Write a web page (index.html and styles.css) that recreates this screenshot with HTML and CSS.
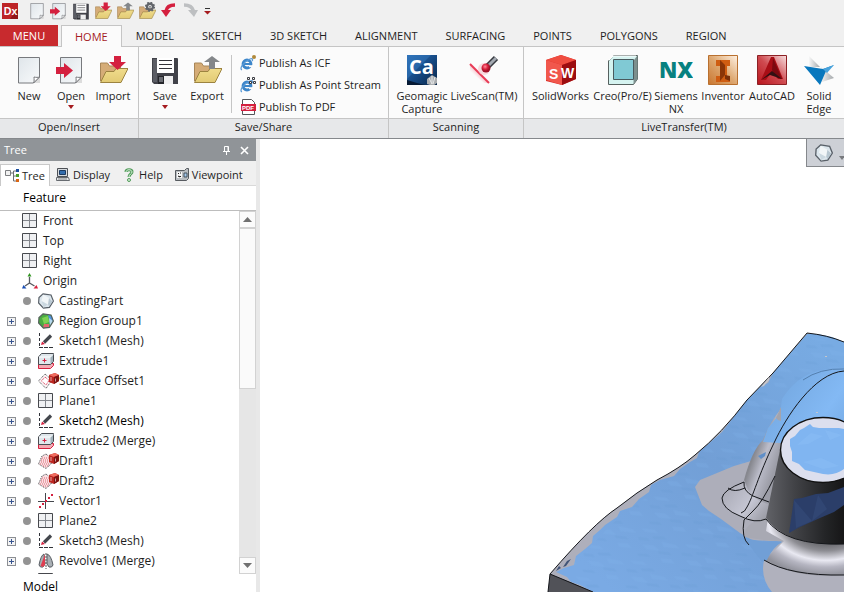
FILE: index.html
```html
<!DOCTYPE html>
<html lang="en">
<head>
<meta charset="utf-8">
<title>Design X</title>
<link rel="stylesheet" href="styles.css">
</head>
<body>
<svg class="defs" aria-hidden="true">
  <defs>
    <linearGradient id="paper" x1="0" y1="0" x2="1" y2="1"><stop offset="0" stop-color="#dfe5ea"/><stop offset="1" stop-color="#f8fafb"/></linearGradient>
    <linearGradient id="gold" x1="0" y1="0" x2="0" y2="1"><stop offset="0" stop-color="#f0dc8c"/><stop offset="1" stop-color="#e2ca74"/></linearGradient>
    <linearGradient id="navy" x1="0" y1="0" x2="1" y2="1"><stop offset="0" stop-color="#2b70b8"/><stop offset=".5" stop-color="#164a85"/><stop offset="1" stop-color="#0a2648"/></linearGradient>
    <linearGradient id="copper" x1="0" y1="1" x2="1" y2="0"><stop offset="0" stop-color="#c9762f"/><stop offset=".5" stop-color="#dea871"/><stop offset="1" stop-color="#fff2e4"/></linearGradient>
    <linearGradient id="crimson" x1="0" y1="1" x2="1" y2="0"><stop offset="0" stop-color="#b8141c"/><stop offset=".5" stop-color="#cf4a50"/><stop offset="1" stop-color="#f8e2e2"/></linearGradient>
    <linearGradient id="beam" x1="1" y1="0" x2="0" y2="1"><stop offset=".3" stop-color="#e8203f"/><stop offset=".75" stop-color="#fff" stop-opacity="0"/></linearGradient>
    <linearGradient id="silver"><stop offset="0" stop-color="#fff"/><stop offset="1" stop-color="#a4a8ab"/></linearGradient>
    <radialGradient id="ball" cx=".4" cy=".35"><stop offset="0" stop-color="#ff8c98"/><stop offset=".6" stop-color="#d91f3c"/><stop offset="1" stop-color="#a01228"/></radialGradient>
  </defs>
  <symbol id="i-new" viewBox="0 0 30 30">
    <path d="M5 3h21v25H5z" fill="#000" opacity=".12"/>
    <path d="M4.500 2.500h21V22l-6 6h-15z" fill="url(#paper)" stroke="#77797d"/>
    <path d="M19.500 28c1-2 .5-4 .5-6 2 .5 4 .5 5.500 0z" fill="#fff" stroke="#77797d"/>
  </symbol>
  <symbol id="i-arrow" viewBox="0 0 30 30"><path d="M0 12h8V8l9 7.500L8 23v-4H0z" fill="#d4203f"/></symbol>
  <symbol id="i-folder" viewBox="0 0 30 30">
    <path d="M2.500 26V8h7l2 3h11v5" fill="#d5ac77" stroke="#a88658"/>
    <path d="M2.500 27.500 8 16.500h8l2-3h12L23 27.500z" fill="url(#gold)" stroke="#9c8340"/>
  </symbol>
  <symbol id="i-down" viewBox="0 0 30 30"><path d="M16 1h7v6h5l-8.500 8L11 7h5z" fill="#d4203f"/></symbol>
  <symbol id="i-up" viewBox="0 0 30 30"><path d="M17 14V7h-5l8-6 8 6h-5v7z" fill="#84878a"/></symbol>
  <symbol id="i-save" viewBox="0 0 30 30">
    <path d="M2 3h25q1 0 1 1v25H4l-2-2z" fill="#414249"/><path d="M3 4h4v23H3z" fill="#5b5d65"/>
    <path d="M7 3h17v15H7z" fill="#fff"/><path d="M9 5.500h13M9 9.500h13M9 13.500h13" stroke="#34343a"/>
    <path d="M8 21h15v8H8z" fill="#efeff0"/><path d="M8 21h6v8H8z" fill="#24252a"/><path d="M9 22h4v5H9z" fill="#696b72"/>
  </symbol>
  <symbol id="i-gear" viewBox="0 0 30 30"><circle cx="20" cy="8" r="5" fill="none" stroke="#62656a" stroke-width="4"/><circle cx="20" cy="8" r="7" fill="none" stroke="#62656a" stroke-width="3" stroke-dasharray="2.750 2.750"/><circle cx="20" cy="8" r="1.500" fill="#62656a"/></symbol>
  <symbol id="i-e" viewBox="0 0 16 16">
    <circle cx="7" cy="9" r="4" fill="none" stroke="#3d86ca" stroke-width="2.800"/><path d="M4 9h8" stroke="#3d86ca" stroke-width="2"/><path d="M9 10.200h4v2H9z" fill="#fbfbfb"/>
    <path d="M2 15C-1 14 3 7 10 4c3-1 3 1 2 2" fill="none" stroke="#5b9bd6" stroke-width="1.300"/>
  </symbol>
  <symbol id="i-gem" viewBox="0 0 16 16">
    <path d="M5 .8 13 2l2.400 6-4 6.400-6 .8L.6 10 1 4.500z" fill="#dce6ed" stroke="#596068" stroke-width="1.200"/>
    <path d="M5 1.500 11 5l3.500 3L10 11.500 5.500 14.500 3.500 8z" fill="#f2f6f8"/><path d="m11 5 3.500 3.500L11 13.500 10 11z" fill="#b8c7d1"/><path d="M3.500 8 10 11.500 5.500 14.500z" fill="#cbd8e0"/>
  </symbol>
  <symbol id="i-region" viewBox="0 0 16 16">
    <path d="M5 .8 13 2l2.400 6-4 6.400-6 .8L.6 10 1 4.500z" fill="#4bac42"/>
    <path d="M10 2l4 1 1 5-3 3z" fill="#4f93e0"/><path d="M4 5l6-2 1 6-5 2z" fill="#7fd354"/><path d="m5 15 1-4 5 0 0 3z" fill="#e46671"/><path d="m11 5 1 8 3-5z" fill="#b5d8ed"/>
    <path d="M5 .8 13 2l2.400 6-4 6.400-6 .8L.6 10 1 4.500z" fill="none" stroke="#54605c" stroke-width="1.200"/>
  </symbol>
  <symbol id="i-plane" viewBox="0 0 16 16"><path d="M.5.5h14v14H.5z" fill="#eff0f2" stroke="#46484d"/><path d="M7.500 1v13M1 7.500h13" stroke="#83868c"/></symbol>
  <symbol id="i-origin" viewBox="0 0 16 16"><path d="M7.500 4v6M7.500 10 3 13M7.500 10l5 3" stroke="#55585e" stroke-width="1.300" fill="none"/><path d="M7.500 0 9.500 3.500h-4z" fill="#2f941e"/><path d="M0 15.500 1.500 12 4.500 15.500z" fill="#1a4fb4"/><path d="m16 15.500-1.500-3.500-3 3.500z" fill="#d9203c"/></symbol>
  <symbol id="i-sketch" viewBox="0 0 16 16"><path d="M1.500 0v14" stroke="#303238" stroke-dasharray="3 2"/><path d="M1 14.500h15" stroke="#303238" stroke-dasharray="4 1"/><path d="M6 9.500 13 2.500" stroke="#44474d" stroke-width="3.200"/><path d="m3 12 1-3.500L7 11z" fill="#d4203f"/></symbol>
  <symbol id="i-extrude" viewBox="0 0 16 16"><path d="M.5 10.500h15v2l-3 3H.5z" fill="#f4a8b2" stroke="#d4203f"/><path d="M.5 11.500V4l3-3.500h12v8l-3 3z" fill="#dfe7ec" stroke="#494d53"/><path d="m12.500 4 2.500-3v7.500l-2.500 2.500z" fill="#9fb0ba"/><path d="M1 4h11.500L15 1.500" stroke="#fff" fill="none"/><path d="M6.500 5.500v4M4.500 7.500h4" stroke="#d4203f"/></symbol>
  <symbol id="i-cube" viewBox="0 0 16 16"><path d="m6 2 6-2 4 2v6l-5 3-5-2z" fill="#bb2620"/><path d="m6 2 6-2 4 2-5 2z" fill="#ef6d60"/><path d="m11 4 5-2v6l-5 3z" fill="#7d1210"/><path d="M8 4v4M12.500 5.500v3" stroke="#fff" stroke-opacity=".6"/></symbol>
  <symbol id="i-offset" viewBox="0 0 21 16"><path d="m7 1 7 6-6 8.500L.5 8z" fill="#fbf4f5" stroke="#3e4045" stroke-dasharray="1 1"/><path d="m7 4 4 3.500L8 12 3.500 8z" fill="#fff" stroke="#d4203f" stroke-dasharray="1 1"/><use href="#i-cube" x="5" width="16" height="16"/></symbol>
  <symbol id="i-draft" viewBox="0 0 21 16"><path d="m8 1 6 5-1 5-5 4.500L.5 11 4 3z" fill="#fadfe2" stroke="#44464b" stroke-dasharray="1 1"/><path d="M4 5h8M3 7h10M3 9h10M2 11h10M5 13h5" stroke="#d96875" stroke-dasharray="1 1"/><use href="#i-cube" x="5" width="16" height="16"/></symbol>
  <symbol id="i-vector" viewBox="0 0 16 16"><path d="M7.500 0v16M0 8.500h16" stroke="#44474d"/><path d="M1 13h2v2H1zM4 10h2v2H4zM7 7h2v2H7zM10 4h2v2h-2zM13 1h2v2h-2z" fill="#d4203f"/></symbol>
  <symbol id="i-revolve" viewBox="0 0 16 16"><path d="M6 1Q3 2 1 12q1 3 4 2l2-3zM9 1q4 1 6 11-1 3-4 2L9 11z" fill="#aab0b5" stroke="#585d63"/><path d="M7 1 2.500 13 5 14l2-2z" fill="#df3e51"/><path d="M8 0v16" stroke="#555" stroke-dasharray="2 1"/></symbol>
  <symbol id="i-caret" viewBox="0 0 8 5"><path d="M1 0h6L4 4z" fill="#a51b1f"/></symbol>
</svg>

<header class="app-head">
  <div class="quick">
    <svg class="logo" viewBox="0 0 18 18"><path d="M0 0h18v18H0z" fill="#bd2427"/><path d="m9 18 9-12v12z" fill="#8f1518"/><text class="logo-text" x="2" y="13">Dx</text></svg>
    <button aria-label="New"><svg><use href="#i-new"/></svg></button>
    <button aria-label="Open"><svg><use href="#i-new"/><use href="#i-arrow"/></svg></button>
    <button aria-label="Save"><svg><use href="#i-save"/></svg></button>
    <button aria-label="Import"><svg><use href="#i-folder"/><use href="#i-down"/></svg></button>
    <button aria-label="Export"><svg><use href="#i-folder"/><use href="#i-up"/></svg></button>
    <button aria-label="Preferences"><svg><use href="#i-folder"/><use href="#i-gear"/></svg></button>
    <button aria-label="Undo"><svg viewBox="0 0 18 18"><path d="M1 8h10l-5 7z" fill="#d4203f"/><path d="M6 9Q7 3 15 3" fill="none" stroke="#d4203f" stroke-width="3.500"/></svg></button>
    <button aria-label="Redo"><svg viewBox="0 0 18 18"><path d="M6 8h10l-4 7z" fill="#bdbfc1"/><path d="M11.500 9Q10 3 2 3" fill="none" stroke="#bdbfc1" stroke-width="3.500"/></svg></button>
    <button class="more" aria-label="Customize"><svg viewBox="0 0 8 8"><path d="M1 1.500h5" stroke="#333"/><path d="M0 4h7L3.500 7.500z" fill="#a51b1f"/></svg></button>
  </div>
  <nav class="tabs">
    <button class="menu">MENU</button>
    <button class="active">HOME</button>
    <button>MODEL</button><button>SKETCH</button><button>3D SKETCH</button><button>ALIGNMENT</button><button>SURFACING</button><button>POINTS</button><button>POLYGONS</button><button>REGION</button>
  </nav>
</header>

<section class="ribbon">
  <div class="group g-open">
    <div class="tools">
      <button><svg><use href="#i-new"/></svg><span>New</span></button>
      <button><svg><use href="#i-new"/><use href="#i-arrow"/></svg><span>Open</span><svg class="caret"><use href="#i-caret"/></svg></button>
      <button><svg><use href="#i-folder"/><use href="#i-down"/></svg><span>Import</span></button>
    </div>
    <h2>Open/Insert</h2>
  </div>
  <div class="group g-save">
    <div class="tools">
      <button><svg><use href="#i-save"/></svg><span>Save</span><svg class="caret"><use href="#i-caret"/></svg></button>
      <button><svg><use href="#i-folder"/><use href="#i-up"/></svg><span>Export</span></button>
      <div class="publish">
        <button><svg viewBox="0 0 16 16"><use href="#i-e"/><circle cx="14" cy="2" r="2" fill="#b0893a"/></svg>Publish As ICF</button>
        <button><svg viewBox="0 0 16 16"><use href="#i-e"/><path d="M7.500.5h2v2h-2zM12.500.5h2v2h-2zM9.500 4.500h2v2h-2zM13.500 4.500h2v2h-2z" fill="#fff" stroke="#3a3c42"/></svg>Publish As Point Stream</button>
        <button><svg viewBox="0 0 16 16"><path d="M2.500.5h9l3 3v12h-12z" fill="#fff" stroke="#54565a"/><path d="M1 5h15v7H1z" fill="#d4203f"/><text class="pdf" x="2" y="11">PDF</text></svg>Publish To PDF</button>
      </div>
    </div>
    <h2>Save/Share</h2>
  </div>
  <div class="group g-scan">
    <div class="tools">
      <button><svg viewBox="0 0 30 30"><path d="M0 0h30v30H0z" fill="url(#navy)"/><path d="M0 24 24 0H0z" fill="#3477bd" opacity=".5"/><path d="M0 30v-5l10 3 8 2z" fill="#061a34"/><text class="ca" x="2" y="19">Ca</text><path d="m20 24 5-4 5 3v5l-4 3-6-2z" fill="#a9acaf"/><path d="m22 23 3 6M25 21v8M28 22l-2 7" stroke="#e5e7e8"/></svg><span>Geomagic<br>Capture</span></button>
      <button><svg viewBox="0 0 30 30"><path d="M1 9 20 28H15L1 16z" fill="url(#beam)"/><path d="M1 9 20 28" stroke="#e83b56" stroke-width="2"/><circle cx="15" cy="14" r="6" fill="#f8cbd1" opacity=".7"/><path d="m19 11 8-8" stroke="#373a40" stroke-width="6"/><path d="m19 11 8-8" stroke="#a3a9b1" stroke-width="3"/><circle cx="17" cy="13" r="4.500" fill="url(#ball)"/></svg><span>LiveScan(TM)</span></button>
    </div>
    <h2>Scanning</h2>
  </div>
  <div class="group g-live">
    <div class="tools">
      <button><svg viewBox="0 0 30 30"><path d="m0 5 15-5 15 5v19l-14 6-16-4z" fill="#d92a26"/><path d="m0 5 15-5 15 5-14 5z" fill="#ef4d40"/><path d="m0 5 16 5v20L0 25z" fill="#f1574c"/><path d="m16 10 14-5v19l-14 6z" fill="#9c0d10"/><text class="sw" x="3" y="24">S</text><text class="sw" x="15" y="23">W</text></svg><span>SolidWorks</span></button>
      <button><svg viewBox="0 0 30 30"><path d="m.5 6 5-5.500h24V24l-4 5.500H.5z" fill="#d5f3f0" stroke="#56615f"/><path d="m26 5 3.500-4.500V24l-4 5.500z" fill="#7c8f8d"/><path d="M5.500 4.500h20v20h-20z" fill="#80c9d4" stroke="#495a5e"/><path d="m1 5 4-4h23" fill="none" stroke="#fff"/></svg><span>Creo(Pro/E)</span></button>
      <button><svg class="wide" viewBox="0 0 34 30"><text class="nx" x="17" y="23">NX</text></svg><span>Siemens<br>NX</span></button>
      <button><svg viewBox="0 0 30 30"><path d="M.5.500h29v29H.5z" fill="url(#copper)" stroke="#b9702f"/><path d="M8 5h14v6h-3v10h3v6H8v-6h4V11H8z" fill="#cf5d12"/><path d="m12 5 5 5v10l-5 6V11z" fill="#8a3507"/><path d="m17 20 5 1v5l-5-2z" fill="#7b3009"/></svg><span>Inventor</span></button>
      <button><svg viewBox="0 0 30 30"><path d="M.5.500h29v29H.5z" fill="url(#crimson)" stroke="#8d2024"/><path d="M14 2h3l9 22h-5l-3-5h-5l-4 6H4z" fill="#a80e16"/><path d="m16 3 9 21-5-1-5-8z" fill="#7b0910"/><path d="m4 25 11-9 10 8-12-4z" fill="#321012"/></svg><span>AutoCAD</span></button>
      <button><svg viewBox="0 0 30 30"><path d="m4 0 12 12H4z" fill="url(#silver)"/><path d="m17 12 13 11-15 5z" fill="url(#silver)"/><path d="M0 11 19 14l11-4-8 6-6 14z" fill="#0877bd"/><path d="m19 14 11-4-7 8z" fill="#49a3dc"/></svg><span>Solid<br>Edge</span></button>
    </div>
    <h2>LiveTransfer(TM)</h2>
  </div>
</section>

<main class="work">
  <aside class="panel">
    <div class="panel-title"><span>Tree</span>
      <button aria-label="Pin"><svg viewBox="0 0 9 9"><path d="M2.500 5V.5h4V5M1 5.500h7M4.500 6v3M6 1v4" fill="none" stroke="#fff"/></svg></button>
      <button aria-label="Close"><svg viewBox="0 0 9 9"><path d="m1 1 7 7M8 1 1 8" stroke="#fff" stroke-width="1.600"/></svg></button>
    </div>
    <nav class="views">
      <button class="active"><svg viewBox="0 0 14 14"><path d="M.5 1.500h5v5h-5z" fill="#f1f1f1" stroke="#7c7e81"/><path d="M6 4h3m3-2H8.500v10H12M8.500 7H12" fill="none" stroke="#6c6f73"/><path d="M11 0h3v3h-3z" fill="#1c4f9e"/><path d="M11 5h3v3h-3z" fill="#4b9e28"/><path d="M11 10h3v3h-3z" fill="#d96614"/></svg>Tree</button>
      <button><svg viewBox="0 0 14 14"><path d="M1.500.5h10v8h-10z" fill="#d6dade" stroke="#4d5156"/><path d="M3.500 2.500h6v4h-6z" fill="#336dad" stroke="#1c3a60"/><path d="M.5 9.500h12l1 3H.5z" fill="#e8e9ea" stroke="#676b70"/><path d="M2 11h9" stroke="#83878b"/></svg>Display</button>
      <button><svg viewBox="0 0 14 14"><path d="M4 4c0-3 6-3 6 0 0 2-3 2-3 5" fill="none" stroke="#4f9a58" stroke-width="3"/><path d="M4 4c0-3 6-3 6 0 0 2-3 2-3 5" fill="none" stroke="#d9f0dc"/><circle cx="7" cy="12" r="1.500" fill="#d9f0dc" stroke="#4f9a58"/></svg>Help</button>
      <button><svg viewBox="0 0 14 14"><path d="M.5 2.500h9l2-2h2v10l-2 2H.5z" fill="#b9bdc1" stroke="#575b60"/><path d="M2 4h5v6H2z" fill="#f6f6f6"/><path d="m3 5 1 1M5 5h1M3 8l2 1 1-1" stroke="#222"/><path d="M9 5h3v4H9z" fill="#a4c9ed" stroke="#44525e"/></svg>Viewpoint</button>
    </nav>
    <h3>Feature</h3>
    <div class="tree">
      <ul>
        <li class="base"><svg><use href="#i-plane"/></svg>Front</li>
        <li class="base"><svg><use href="#i-plane"/></svg>Top</li>
        <li class="base"><svg><use href="#i-plane"/></svg>Right</li>
        <li class="base"><svg><use href="#i-origin"/></svg>Origin</li>
        <li><i></i><b></b><svg><use href="#i-gem"/></svg>CastingPart</li>
        <li><button aria-label="Expand"></button><b></b><svg><use href="#i-region"/></svg>Region Group1</li>
        <li><button aria-label="Expand"></button><b></b><svg><use href="#i-sketch"/></svg>Sketch1 (Mesh)</li>
        <li><button aria-label="Expand"></button><b></b><svg><use href="#i-extrude"/></svg>Extrude1</li>
        <li><button aria-label="Expand"></button><b></b><svg class="long"><use href="#i-offset"/></svg>Surface Offset1</li>
        <li><button aria-label="Expand"></button><b></b><svg><use href="#i-plane"/></svg>Plane1</li>
        <li class="current"><button aria-label="Expand"></button><b></b><svg><use href="#i-sketch"/></svg>Sketch2 (Mesh)</li>
        <li><button aria-label="Expand"></button><b></b><svg><use href="#i-extrude"/></svg>Extrude2 (Merge)</li>
        <li><button aria-label="Expand"></button><b></b><svg class="long"><use href="#i-draft"/></svg>Draft1</li>
        <li><button aria-label="Expand"></button><b></b><svg class="long"><use href="#i-draft"/></svg>Draft2</li>
        <li><button aria-label="Expand"></button><b></b><svg><use href="#i-vector"/></svg>Vector1</li>
        <li><i></i><b></b><svg><use href="#i-plane"/></svg>Plane2</li>
        <li><button aria-label="Expand"></button><b></b><svg><use href="#i-sketch"/></svg>Sketch3 (Mesh)</li>
        <li><button aria-label="Expand"></button><b></b><svg><use href="#i-revolve"/></svg>Revolve1 (Merge)</li>
        <li><i></i><i class="gap"></i><svg><use href="#i-plane"/></svg></li>
      </ul>
      <div class="scroll">
        <button aria-label="Scroll up"><svg viewBox="0 0 9 5"><path d="m4.500 0 4.500 5H0z"/></svg></button>
        <div class="track"><div class="thumb"></div></div>
        <button aria-label="Scroll down"><svg viewBox="0 0 9 5"><path d="M0 0h9L4.500 5z"/></svg></button>
      </div>
    </div>
    <h3 class="model">Model</h3>
  </aside>

  <section class="canvas">
    <svg class="part" viewBox="260 139 584 453" preserveAspectRatio="xMaxYMax slice" role="img" aria-label="Casting part">
      <defs>
        <linearGradient id="wall" x1="767" x2="844" gradientUnits="userSpaceOnUse"><stop offset="0" stop-color="#606166"/><stop offset=".35" stop-color="#424347"/><stop offset=".75" stop-color="#242527"/><stop offset="1" stop-color="#161617"/></linearGradient>
        <linearGradient id="rib" x1="752" y1="460" x2="775" y2="468" gradientUnits="userSpaceOnUse"><stop offset="0" stop-color="#87888f"/><stop offset=".45" stop-color="#bcbdca"/><stop offset="1" stop-color="#9c9da7"/></linearGradient>
        <linearGradient id="arch" x1="780" y1="395" x2="844" y2="440" gradientUnits="userSpaceOnUse"><stop offset="0" stop-color="#77abe4"/><stop offset=".6" stop-color="#83b9f4"/><stop offset="1" stop-color="#76abe5"/></linearGradient>
        <linearGradient id="skin" x1="600" y1="580" x2="820" y2="340" gradientUnits="userSpaceOnUse"><stop offset="0" stop-color="#7aaae4"/><stop offset=".5" stop-color="#729fd6"/><stop offset="1" stop-color="#78abe3"/></linearGradient>
        <linearGradient id="foot" x1="725" y1="480" x2="770" y2="515" gradientUnits="userSpaceOnUse"><stop offset="0" stop-color="#a6a7b2"/><stop offset=".6" stop-color="#c5c6d3"/><stop offset="1" stop-color="#9899a2"/></linearGradient>
        <radialGradient id="flare" gradientUnits="userSpaceOnUse" cx="826" cy="520" r="80" gradientTransform="matrix(1 0 0 .7 0 156)"><stop offset=".3" stop-color="#46474a"/><stop offset=".55" stop-color="#8d8d93"/><stop offset=".72" stop-color="#e9e9f2"/><stop offset=".84" stop-color="#b5b5c1"/><stop offset="1" stop-color="#8f9099"/></radialGradient>
        <pattern id="facets" width="46" height="34" patternUnits="userSpaceOnUse" patternTransform="rotate(20)"><path d="m2 5 12-3 5 2-13 3zM25 11l14-2 5 2-15 4zM8 20l11-3 7 3-12 3zM30 27l10-3 5 3-12 3z" fill="#86b9f0" opacity=".18"/><path d="m14 9 11-4 4 2-12 4zM1 14l9-2 4 2-11 3zM24 21l11-3 5 2-13 3zM6 30l10-3 4 2-12 3z" fill="#5f8fc9" opacity=".13"/></pattern>
      </defs>
      <path d="M550 574Q594 523 617 508 637 492 657 480 680 468 695 455 722 433 747 400L773 373 807 333Q827 335 844 342V592H548z" fill="#aeafbb"/>
      <path id="mesh" d="M556 572L564 568 574 565 576 556 585 549 592 543 593 536 600 530 605 525 617 517 620 511 632 507 639 499 649 492 651 485 660 480 674 476 680 469 690 462 697 458 699 452 722 432 747 400 762 385 768 383 773 373 807 334 818 334 832 337 844 342V592H772L764 576 762 566 764 558 758 545 740 533 722 520 705 508 702 499 698 495 695 487 700 481 715 474 735 466 752 461 763 440H844V592H593L580 585 571 582 567 577z" fill="url(#skin)"/>
      <path d="M567 570L620 516 665 484 700 455 750 400 807 336 844 344V440H763L752 461 700 482 702 500 758 545 764 560 772 592H593z" fill="url(#facets)"/>
      <path d="m695 487 5-7 17-7 17-7 17-5 12-18h25v98h-18l-18-1-12-7-19-14-12-8-7-6z" fill="#adaeba"/>
      <path d="m764 560 5-10 15-10 60-3v55h-72q-12-14-8-32z" fill="#b0b1bd"/>
      <path d="M744 480q8-30 19-40 8-20 18-31l1 35-3 62-22 3z" fill="url(#rib)"/>
      <path d="M763 442l5-14 10-12 3-9 1-8q18-29 50-30h12v75l-64-1z" fill="url(#arch)"/>
      <path d="M776 418l5-11v14l-3-1z" fill="#a3a4ad"/><path d="m758 456 8-4-1 4-4 3z" fill="#608fc8"/>
      <path d="M744 482q-21 8-22 15 0 13 18 19 15 7 26 3l5-14q-22-6-27-23" fill="url(#foot)"/>
      <path d="M766 519q-22 3-22 18l20 3 24 2z" fill="#a8a9b3"/>
      <path d="M768 518q20 22 76 21v36q-48 4-80-15l11-10 9-9-18-10z" fill="url(#flare)"/>
      <path d="M744 538l10 2 8 2h20q-9 5-15 18l-5 2z" fill="#719fd6"/>
      <path d="M780 450 766 518q19 28 78 26v-94z" fill="url(#wall)"/>
      <path d="m794 499 8-1 14-4 12-1 16-6v18l-10 7-14 6-20 9-11 6z" fill="#2b3e69"/>
      <path d="m794 500 18 21-16 7zM818 495l9 14-15 12M830 492l12 12" fill="#3d5688" opacity=".35"/>
      <ellipse cx="823" cy="450" rx="42.500" ry="32.500" fill="#dcdfee" stroke="#111" stroke-width="1.400"/>
      <path d="m804 428 6-4 3 3 6 1h20l5 1v40q-9 7-21 5l-9-2-9-2-6-6-7-3v-9l-2-6v-7l5-3 5-6z" fill="#80b5f1"/><path d="M797 445l14-12 12 3-15 8zM825 430l17 5-12 5zM803 462l18-4 18 8-16 3z" fill="#95c7fb" opacity=".25"/>
      <path d="M550 574 548 592h45q-20-9-43-18" fill="#515258"/>
      <g fill="none" stroke="#15171b">
        <path d="M548 592L550 574Q594 523 617 508 637 492 657 480 680 468 695 455 722 433 747 400L773 373 807 333Q827 335 844 342M550 574l43 18"/>
        <path d="M844 371c-30 2-58 46-70 72-16 33-21 54-27 64q-2 5-6 6"/>
        <path d="M744 482q-21 8-22 16 0 11 18 18 15 8 26 3M744 482q-1 9 9 14l16 6M728 488q6 5 17 0M775 476q-13 27-22 35l-9 9q-3 18 5 25M766 519q19 27 78 25M764 560q26 16 80 15"/>
      </g>
      <path d="M803 380q17-12 41-11" fill="none" stroke="#547fae"/><path d="m563 567 4-6 4-2-5 7zM556 571l3-5 2 2z" fill="#405477"/>
      <path d="m761 387 5-6 3-4v3l-5 6zM825 356h2v1h-2zM816 412h2v1h-2z" fill="#c6c6cb"/>
    </svg>
    <button class="view-tool" aria-label="Shading"><svg><use href="#i-gem"/></svg><svg class="drop" viewBox="0 0 6 4"><path d="M0 0h6L3 4z"/></svg></button>
  </section>
</main>
</body>
</html>
```
FILE: styles.css
```css
* { box-sizing: border-box; }
body {
  margin: 0;
  height: 100vh;
  display: flex;
  flex-direction: column;
  overflow: hidden;
  background: #fff;
  color: #1e1e1e;
  font: 12px/16px "Open Sans", "Noto Sans", sans-serif;
}
button { margin: 0; padding: 0; border: 0; background: none; color: inherit; font: inherit; white-space: nowrap; }
svg { display: block; flex: none; }
h2, h3, ul { margin: 0; padding: 0; font: inherit; list-style: none; }
.defs { position: absolute; width: 0; height: 0; }

.app-head { flex: none; background: #f0f0f0; }
.quick { display: flex; align-items: center; gap: 4px; height: 25px; padding: 0 2px 3px; }
.quick svg { width: 18px; height: 18px; }
.quick .logo { width: 16px; height: 16px; margin-right: 6px; }
.quick .more svg { width: 8px; height: 8px; }
.logo-text { font: bold 12px "Liberation Sans", sans-serif; fill: #fff; }

.tabs { display: flex; height: 22px; border-bottom: 1px solid #c5c5c5; }
.tabs button { padding: 0 14px; height: 22px; font-size: 11px; }
.tabs .menu { flex: 0 0 58px; padding: 0; background: #c82a2e; color: #fff; margin-right: 3px; height: 21px; }
.tabs .active { background: #fbfbfb; color: #a51b1f; border: 1px solid #c5c5c5; border-bottom: 0; padding: 0 13px; }

.ribbon { flex: none; display: flex; background: #fbfbfb; border-bottom: 1px solid #85888c; font-size: 11px; }
.group { display: flex; flex-direction: column; border-right: 1px solid #c5c5c5; }
.g-open { flex: 0 0 139px; }
.g-save { flex: 0 0 250px; }
.g-scan { flex: 0 0 135px; }
.g-live { flex: 1; min-width: 0; border-right: 0; }
.group h2 { height: 20px; border-top: 1px solid #c5c5c5; background: #e7e8ea; text-align: center; line-height: 16px; }
.tools { display: grid; height: 71px; padding-top: 8px; }
.g-open .tools { grid-template-columns: repeat(3, 42px); padding-left: 8px; }
.g-save .tools { grid-template-columns: 42px 42px 1fr; padding-left: 5px; }
.g-scan .tools { grid-template-columns: 52px 72px; padding-left: 7px; }
.g-live .tools { grid-template-columns: 63px 61px 46px 48px 50px 44px; padding-left: 5px; }
.tools > button { display: flex; flex-direction: column; align-items: center; line-height: 13px; }
.tools > button > svg { width: 30px; height: 30px; margin-bottom: 4px; }
.tools > button > .wide { width: 34px; }
.tools > button > .caret { width: 8px; height: 5px; margin: 3px 0 0; }
.publish { display: flex; flex-direction: column; gap: 6px; height: 58px; margin-left: 3px; padding-left: 8px; border-left: 1px solid #c5c5c5; }
.publish button { display: flex; align-items: center; gap: 3px; }
.publish svg { width: 16px; height: 16px; }
.pdf { font: bold 6px "Liberation Sans", sans-serif; fill: #fff; }
.ca { font: bold 20px "Open Sans", sans-serif; fill: #fff; }
.sw { font: bold 14px "Liberation Sans", sans-serif; fill: #fff; }
.nx { font: 800 22px "Open Sans", sans-serif; fill: #078180; text-anchor: middle; }

.work { flex: 1; min-height: 0; display: flex; }
.panel { flex: 0 0 260px; min-width: 0; display: flex; flex-direction: column; border-right: 4px solid #e8e8e8; }
.panel-title { display: flex; align-items: center; height: 22px; padding: 0 7px 0 4px; gap: 9px; background: #909498; color: #fff; font-size: 11px; }
.panel-title span { flex: 1; }
.panel-title svg { width: 9px; height: 9px; }
.views { display: flex; height: 25px; padding-top: 3px; background: #f0f0f0; border-bottom: 1px solid #d9d9d9; font-size: 11px; }
.views button { display: flex; align-items: center; gap: 3px; padding: 0 6px; height: 22px; }
.views svg { width: 14px; height: 14px; }
.views .active { background: #fff; border: 1px solid #c9c9c9; border-bottom: 0; padding: 0 4px; }
.panel h3 { flex: none; height: 25px; padding-left: 23px; line-height: 24px; color: #000; border-bottom: 1px solid #bdbdbd; }
.panel .model { height: 18px; border: 0; line-height: 26px; }
.tree { flex: 1; min-height: 0; display: flex; overflow: hidden; }
.tree ul { flex: 1; }
.tree li { display: flex; align-items: center; height: 20px; padding-left: 7px; }
.tree .base { padding-left: 22px; }
.tree .current { color: #000; }
.tree li svg { width: 16px; height: 16px; margin-right: 5px; }
.tree li .long { width: 21px; margin-right: 0; }
.tree li button, .tree li i { width: 9px; height: 9px; }
.tree li .gap { width: 22px; }
.tree li button {
  border: 1px solid #8c8f94;
  background: linear-gradient(#37548f, #37548f) center / 5px 1px no-repeat, linear-gradient(#37548f, #37548f) center / 1px 5px no-repeat, #f4f4f4;
}
.tree li b { width: 8px; height: 8px; margin: 0 7px; border-radius: 50%; background: #939393; }
.scroll { flex: 0 0 17px; display: flex; flex-direction: column; background: #e6e6e6; }
.scroll button { display: grid; place-items: center; height: 17px; background: #fbfbfb; border: 1px solid #d2d2d2; }
.scroll svg { width: 9px; height: 5px; fill: #707070; }
.track { flex: 1; }
.thumb { height: 49%; background: #fafafa; border: 1px solid #d2d2d2; }

.canvas { flex: 1; min-width: 0; position: relative; overflow: hidden; }
.part { width: 100%; height: 100%; }
.view-tool { position: absolute; top: 0; right: 0; display: flex; align-items: center; width: 38px; height: 28px; padding-left: 8px; gap: 6px; overflow: hidden; background: #cdd0d6; border: 1px solid #85888c; border-width: 0 0 1px 1px; }
.view-tool svg { width: 18px; height: 18px; }
.view-tool .drop { width: 6px; height: 4px; margin-top: 10px; fill: #77797d; }
```
